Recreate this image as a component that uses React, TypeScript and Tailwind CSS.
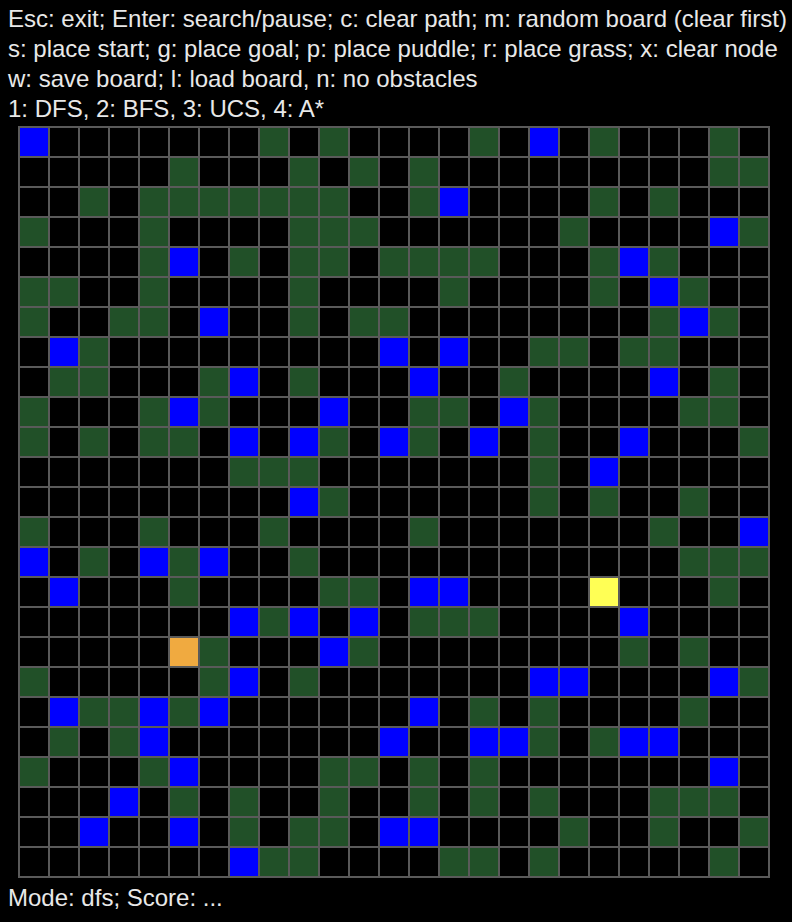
import React from "react";

// board: 25x25, each row lists the non-empty cells as "col+kind"
// g = grass, b = puddle, y = start, o = goal
const ROWS: string[] = [
  "0b 8g 10g 15g 17b 19g 23g",
  "5g 9g 11g 13g 23g 24g",
  "2g 4g 5g 6g 7g 8g 9g 10g 13g 14b 19g 21g",
  "0g 4g 9g 10g 11g 18g 23b 24g",
  "4g 5b 7g 9g 10g 12g 13g 14g 15g 19g 20b 21g",
  "0g 1g 4g 9g 14g 19g 21b 22g",
  "0g 3g 4g 6b 9g 11g 12g 21g 22b 23g",
  "1b 2g 12b 14b 17g 18g 20g 21g",
  "1g 2g 6g 7b 9g 13b 16g 21b 23g",
  "0g 4g 5b 6g 10b 13g 14g 16b 17g 22g 23g",
  "0g 2g 4g 5g 7b 9b 10g 12b 13g 15b 17g 20b 24g",
  "7g 8g 9g 17g 19b",
  "9b 10g 17g 19g 22g",
  "0g 4g 8g 13g 21g 24b",
  "0b 2g 4b 5g 6b 9g 22g 23g 24g",
  "1b 5g 10g 11g 13b 14b 19y 23g",
  "7b 8g 9b 11b 13g 14g 15g 20b",
  "5o 6g 10b 11g 20g 22g",
  "0g 6g 7b 9g 17b 18b 23b 24g",
  "1b 2g 3g 4b 5g 6b 13b 15g 17g 22g",
  "1g 3g 4b 12b 15b 16b 17g 19g 20b 21b",
  "0g 4g 5b 10g 11g 13g 15g 23b",
  "3b 5g 7g 10g 13g 15g 17g 21g 22g 23g",
  "2b 5b 7g 9g 10g 12b 13b 18g 21g 24g",
  "7b 8g 9g 14g 15g 17g 23g",
];

const SIZE = 25;

const CELL_CLASS: Record<string, string> = {
  ".": "bg-black",
  g: "bg-[#215028]",
  b: "bg-[#0000ff]",
  y: "bg-[#ffff55]",
  o: "bg-[#f0aa40]",
};

function buildBoard(): string[][] {
  return ROWS.map(line => {
    const row = Array(SIZE).fill(".");
    line.split(" ").forEach(tok => {
      const kind = tok.slice(-1);
      const col = parseInt(tok.slice(0, -1), 10);
      row[col] = kind;
    });
    return row;
  });
}

const HELP = [
  "Esc: exit; Enter: search/pause; c: clear path; m: random board (clear first)",
  "s: place start; g: place goal; p: place puddle; r: place grass; x: clear node",
  "w: save board; l: load board, n: no obstacles",
  "1: DFS, 2: BFS, 3: UCS, 4: A*",
];

export default function App() {
  const board = buildBoard();

  return (
    <div
      className="h-[922px] w-[792px] overflow-hidden bg-black text-[#e8e8e8] text-[24px] leading-[30px]"
      style={{ fontFamily: '"Liberation Sans", Arial, sans-serif' }}
    >
      {/* key help */}
      <div className="pl-2 pt-[4px] whitespace-nowrap">
        {HELP.map(l => (
          <div key={l}>{l}</div>
        ))}
      </div>

      {/* board */}
      <div className="ml-[18px] mt-[2px] grid w-[752px] grid-cols-[repeat(25,28px)] gap-[2px] bg-[#5a5a5a] p-[2px]">
        {board.map((row, r) =>
          row.map((c, i) => <div key={`${r}-${i}`} className={`h-[28px] w-[28px] ${CELL_CLASS[c]}`} />)
        )}
      </div>

      {/* status */}
      <div className="pl-2 mt-[5px] whitespace-nowrap">Mode: dfs; Score: ...</div>
    </div>
  );
}
